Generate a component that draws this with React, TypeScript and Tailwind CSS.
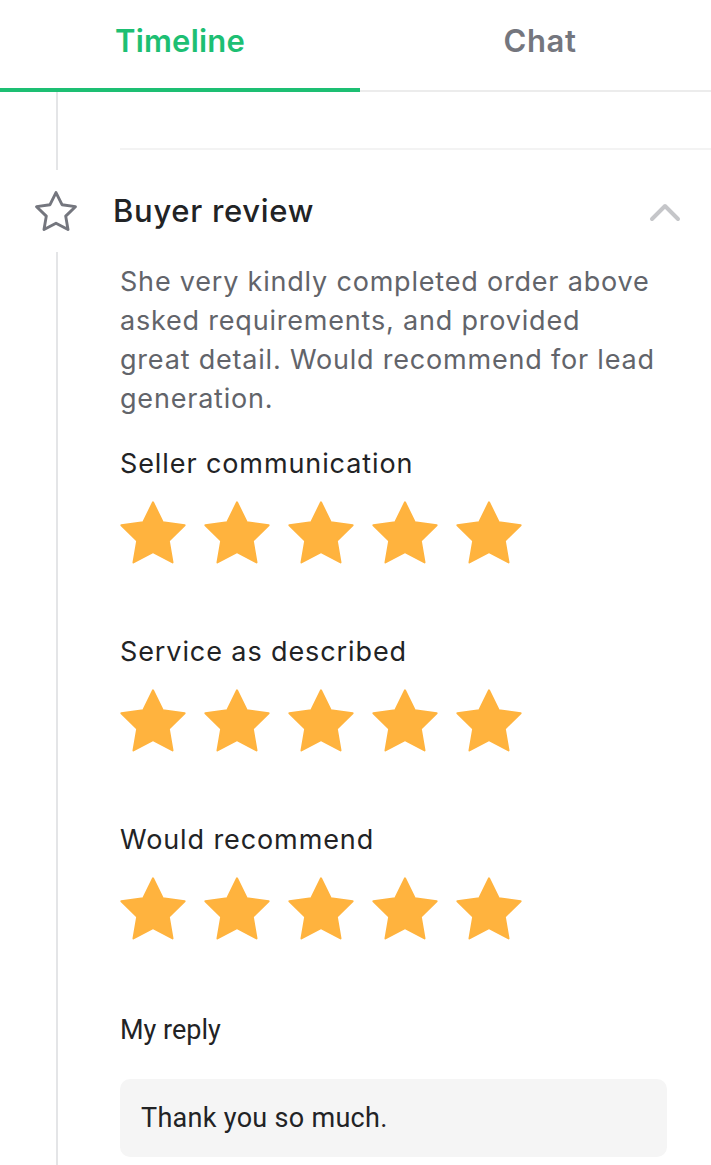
import React from 'react';

const STAR = 'M12 2l3.09 6.26L22 9.27l-5 4.87 1.18 6.88L12 17.77l-6.18 3.25L7 14.14 2 9.27l6.91-1.01L12 2z';

const FilledStar = () => (
  <svg width="66" height="63" viewBox="1.6 1.6 20.8 19.9" className="shrink-0">
    <path d={STAR} fill="#ffb33e" stroke="#ffb33e" strokeWidth="0.6" strokeLinejoin="round" />
  </svg>
);

const StarRow = () => (
  <div className="flex gap-[18px]">
    {[0, 1, 2, 3, 4].map((i) => (
      <FilledStar key={i} />
    ))}
  </div>
);

const ratings = ['Seller communication', 'Service as described', 'Would recommend'];

const Line = ({ h }: { h: string }) => <div className={`ml-[56px] w-[2px] bg-[#e4e5e7] ${h}`} />;

export default function App() {
  return (
    <div className="w-[711px] h-[1165px] overflow-hidden bg-white font-['Inter',sans-serif]">
      {/* tabs */}
      <div className="flex h-[92px] border-b-2 border-[#ececec]">
        <div className="w-[360px] shrink-0 flex items-center justify-center border-b-4 border-[#1dbf73] -mb-[2px] pb-[6px]">
          <span className="text-[31px] font-semibold text-[#1dbf73] tracking-[0.2px]">Timeline</span>
        </div>
        <div className="flex-1 flex items-center justify-center pb-[8px] pl-[9px]">
          <span className="text-[31px] font-semibold text-[#74767e] tracking-[0.6px]">Chat</span>
        </div>
      </div>

      {/* previous item tail */}
      <div className="flex h-[78px]">
        <div className="w-[120px] shrink-0">
          <Line h="h-full" />
        </div>
        <div className="flex-1 flex flex-col justify-start">
          <div className="h-[56px]" />
          <div className="h-[2px] bg-[#f3f3f3]" />
        </div>
      </div>

      {/* header */}
      <div className="flex items-center h-[82px]">
        <div className="w-[113px] shrink-0 flex">
          <svg width="42" height="40" viewBox="1.2 1.2 21.6 20.6" className="ml-[35px]">
            <path d={STAR} fill="none" stroke="#74767e" strokeWidth="1.5" strokeLinejoin="round" />
          </svg>
        </div>
        <span className="flex-1 text-[31px] font-medium text-[#222325] tracking-[0.7px]">Buyer review</span>
        <svg width="32" height="22" viewBox="0 0 32 22" className="mr-[30px]">
          <polyline points="3,19 16,6 29,19" fill="none" stroke="#c5c6c9" strokeWidth="4" strokeLinecap="round" strokeLinejoin="round" />
        </svg>
      </div>

      {/* body */}
      <div className="flex">
        <div className="w-[120px] shrink-0">
          <Line h="h-[920px]" />
        </div>
        <div className="flex-1 pr-[44px] pt-[10px]">
          <p className="text-[27px] leading-[39px] text-[#62646a] tracking-[0.8px]">
            She very kindly completed order above
            <br />
            asked requirements, and provided
            <br />
            great detail. Would recommend for lead
            <br />
            generation.
          </p>

          {ratings.map((r, i) => (
            <div key={r} className={i === 0 ? 'mt-[26px]' : 'mt-[68px]'}>
              <div className="text-[27px] leading-[39px] text-[#222325] tracking-[0.9px]">{r}</div>
              <div className="mt-[18px]">
                <StarRow />
              </div>
            </div>
          ))}

          <div className="mt-[72px] font-['Roboto',sans-serif] text-[27px] leading-[36px] text-[#222325]">My reply</div>
          <div className="mt-[31px] h-[78px] rounded-[10px] bg-[#f5f5f5] flex items-center px-[21px]">
            <span className="font-['Roboto',sans-serif] text-[27px] text-[#222325] tracking-[0.3px]">Thank you so much.</span>
          </div>
        </div>
      </div>
    </div>
  );
}
